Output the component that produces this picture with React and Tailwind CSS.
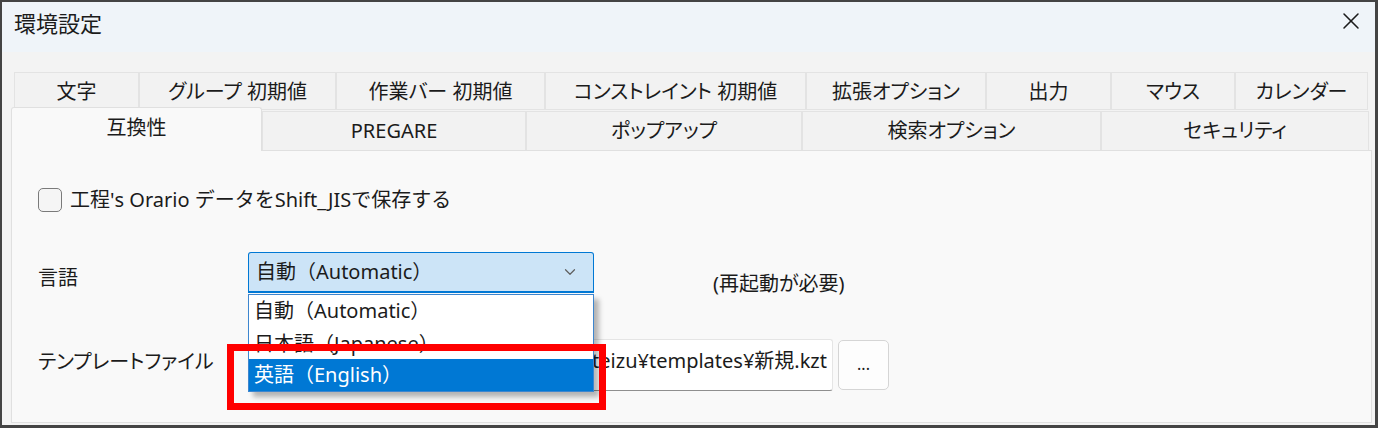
import { X, ChevronDown } from 'lucide-react';

const FONT = "font-['Noto_Sans','Noto_Sans_CJK_JP',sans-serif] [font-feature-settings:'palt']";
const FULLWIDTH = '[font-feature-settings:normal]';

const ROW1 = [
  ['文字', 125],
  ['グループ 初期値', 197],
  ['作業バー 初期値', 209],
  ['コンストレイント 初期値', 261],
  ['拡張オプション', 180],
  ['出力', 125],
  ['マウス', 124],
  ['カレンダー', 133],
];

const ROW2 = [
  ['互換性', 251, true],
  ['PREGARE', 264],
  ['ポップアップ', 276],
  ['検索オプション', 299],
  ['セキュリティ', 268],
];

/* ── 言語 combo + open list ─────────────────────────── */
function LanguageCombo() {
  return (
    <div className={`relative w-[346px] ${FULLWIDTH}`}>
      <div className="h-[41px] flex items-center justify-between pl-[7px] pr-[14px] bg-[#cce4f7] border border-[#0078d4] border-b-2 rounded-t-[3px]">
        <span>自動（Automatic）</span>
        <ChevronDown className="w-[18px] h-[18px] text-[#5f5f5f]" strokeWidth={1.6} />
      </div>
      <div className="absolute left-0 top-full mt-[1px] w-full z-20 bg-white border border-[#3d86cf] shadow-[5px_5px_5px_rgba(0,0,0,0.28)]">
        <div className="h-[32px] flex items-center pl-[5px]">自動（Automatic）</div>
        <div className="h-[32px] flex items-center pl-[5px] pt-[2px]">日本語（Japanese）</div>
        <div className="h-[32px] flex items-center pl-[5px] bg-[#0078d4] text-white">英語（English）</div>
      </div>
    </div>
  );
}

export default function App() {
  return (
    <div className={`${FONT} w-[1378px] h-[428px] flex flex-col bg-[#f3f3f3] border-l-2 border-t-2 border-r-[3px] border-b-[3px] border-[#444444] text-[#1b1b1b] text-[20px] overflow-hidden`}>

      {/* タイトルバー */}
      <div className="h-[50px] shrink-0 bg-[#eff4f9] flex items-start justify-between pl-[12px] pr-[10px] pt-[6px]">
        <span className="text-[22px] leading-[30px]">環境設定</span>
        <X className="w-[28px] h-[28px] text-[#1b1b1b] mt-[-1px]" strokeWidth={1.3} />
      </div>

      {/* タブ */}
      <div className="flex-1 flex flex-col pt-[20px] pb-[2px]">
        <div className="flex h-[38px] ml-[12px]">
          {ROW1.map(([label, w]) => (
            <div key={label} style={{ width: w }}
              className="shrink-0 flex items-center justify-center bg-[#f2f2f2] border border-[#e3e3e3] whitespace-nowrap pt-[2px]">
              {label}
            </div>
          ))}
        </div>

        <div className="flex items-end h-[40px] ml-[9px]">
          {ROW2.map(([label, w, active]) => (
            active ? (
              <div key={label} style={{ width: w }}
                className="relative z-10 shrink-0 h-[44px] mb-[-1px] flex items-center justify-center bg-[#f9f9f9] border border-b-0 border-[#e0e0e0] rounded-t-[3px] pb-[4px]">
                {label}
              </div>
            ) : (
              <div key={label} style={{ width: w }}
                className="shrink-0 h-[39px] flex items-center justify-center bg-[#f2f2f2] border border-b-0 border-[#e3e3e3] whitespace-nowrap">
                {label}
              </div>
            )
          ))}
        </div>

        {/* 互換性 パネル */}
        <div className="relative flex-1 ml-[9px] w-[1361px] bg-[#f9f9f9] border border-[#e0e0e0] pt-[36px] pl-[26px]">

          <div className="flex items-center h-[26px]">
            <div className="w-[24px] h-[24px] rounded-[5px] border-[1.5px] border-[#7a7a7a] bg-[#f5f5f5]" />
            <span className={`ml-[8px] ${FULLWIDTH}`}>工程's Orario データをShift_JISで保存する</span>
          </div>

          <div className="flex items-center mt-[39px]">
            <span className="w-[210px] relative top-[5px]">言語</span>
            <LanguageCombo />
            <span className="ml-[119px] relative top-[11px]">(再起動が必要)</span>
          </div>

          <div className="flex items-center mt-[46px]">
            <span className="w-[210px] relative top-[-3px]">テンプレートファイル</span>
            <div className="w-[585px] h-[52px] flex items-center justify-end overflow-hidden whitespace-nowrap bg-white border border-[#e5e5e5] border-b-[#8f8f8f] rounded-[3px] pr-[5px] pb-[8px]">
              C:¥Users¥user¥AppData¥Roaming¥Kouteizu¥templates¥新規.kzt
            </div>
            <div className="ml-[5px] w-[51px] h-[50px] flex items-center justify-center bg-[#fdfdfd] border border-[#d5d5d5] rounded-[5px] text-[16px] pb-[2px]">
              ...
            </div>
          </div>

          {/* 注記の赤枠 */}
          <div className="absolute z-30 left-[215px] top-[193px] w-[379px] h-[66px] border-[7px] border-[#ff0000]" />
        </div>
      </div>
    </div>
  );
}
